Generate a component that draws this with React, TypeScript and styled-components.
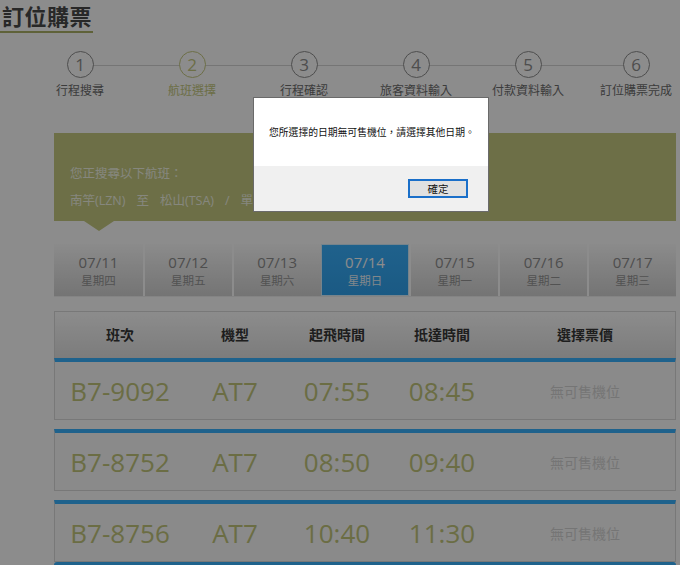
import styled, { createGlobalStyle } from 'styled-components';

const GlobalStyle = createGlobalStyle`
  html, body {
    margin: 0;
    padding: 0;
    background: #ffffff;
    overflow: hidden;
  }
  body {
    font-family: "Open Sans", "Noto Sans CJK TC", sans-serif;
  }
`;

const colors = {
  olive: '#c6ca81',
  oliveText: '#c3c77c',
  blue: '#3ab2ff',
  stepGray: '#8e8e8e',
  labelGray: '#6d6d6d',
  border: '#dadada',
};

const steps = ['行程搜尋', '航班選擇', '行程確認', '旅客資料輸入', '付款資料輸入', '訂位購票完成'];
const dates = [
  { d: '07/11', w: '星期四' },
  { d: '07/12', w: '星期五' },
  { d: '07/13', w: '星期六' },
  { d: '07/14', w: '星期日' },
  { d: '07/15', w: '星期一' },
  { d: '07/16', w: '星期二' },
  { d: '07/17', w: '星期三' },
];
const flights = [
  { no: 'B7-9092', type: 'AT7', dep: '07:55', arr: '08:45' },
  { no: 'B7-8752', type: 'AT7', dep: '08:50', arr: '09:40' },
  { no: 'B7-8756', type: 'AT7', dep: '10:40', arr: '11:30' },
];

export default function App() {
  return (
    <Page>
      <GlobalStyle />
      <Title>訂位購票</Title>

      <Steps>
        {steps.map((s, i) => (
          <Step key={s}>
            <StepCircle $active={i === 1}>{i + 1}</StepCircle>
            <StepLabel $active={i === 1}>{s}</StepLabel>
          </Step>
        ))}
      </Steps>

      <Banner>
        <BannerLine>您正搜尋以下航班：</BannerLine>
        <BannerLine>
          南竿(LZN)<Sep>至</Sep>松山(TSA)<Sep>/</Sep>單程
        </BannerLine>
      </Banner>

      <DateTabs>
        {dates.map((t, i) => (
          <DateTab key={t.d} $active={i === 3}>
            <TabDate>{t.d}</TabDate>
            <TabDay>{t.w}</TabDay>
          </DateTab>
        ))}
      </DateTabs>

      <TableHead>
        <HeadCell>班次</HeadCell>
        <HeadCell>機型</HeadCell>
        <HeadCell>起飛時間</HeadCell>
        <HeadCell>抵達時間</HeadCell>
        <HeadCell>選擇票價</HeadCell>
      </TableHead>

      {flights.map((f) => (
        <FlightRow key={f.no}>
          <BigCell>{f.no}</BigCell>
          <BigCell>{f.type}</BigCell>
          <BigCell>{f.dep}</BigCell>
          <BigCell>{f.arr}</BigCell>
          <SoldOut>無可售機位</SoldOut>
        </FlightRow>
      ))}
      <NextRowEdge />

      <Overlay>
        <Dialog>
          <DialogBody>您所選擇的日期無可售機位，請選擇其他日期。</DialogBody>
          <DialogFoot>
            <OkButton>確定</OkButton>
          </DialogFoot>
        </Dialog>
      </Overlay>
    </Page>
  );
}

const Page = styled.div`
  width: 680px;
  height: 565px;
  overflow: hidden;
  display: flex;
  flex-direction: column;
  & > * {
    flex-shrink: 0;
  }
`;

const Title = styled.h1`
  align-self: flex-start;
  margin: 0;
  padding: 0 1px 0 2px;
  font-family: "Noto Sans CJK TC", sans-serif;
  font-size: 22px;
  font-weight: 700;
  line-height: 31px;
  letter-spacing: 0.5px;
  color: #4a4a4a;
  border-bottom: 2px solid #adb269;
`;

const Steps = styled.div`
  display: grid;
  grid-template-columns: repeat(5, 112px) 104px;
  margin: 18px 0 0 24px;
`;

const Step = styled.div`
  position: relative;
  display: flex;
  flex-direction: column;
  align-items: center;
  &::before {
    content: '';
    position: absolute;
    top: 14px;
    left: 0;
    right: 0;
    height: 1px;
    background: #d6d6d6;
  }
  &:first-child::before { left: 50%; }
  &:last-child::before { right: 50%; }
`;

const StepCircle = styled.div<{ $active?: boolean }>`
  position: relative;
  width: 25px;
  height: 25px;
  border: 1.5px solid ${(p) => (p.$active ? colors.olive : colors.stepGray)};
  border-radius: 50%;
  background: #ffffff;
  color: ${(p) => (p.$active ? colors.olive : colors.stepGray)};
  font-size: 17px;
  line-height: 25px;
  text-align: center;
`;

const StepLabel = styled.div<{ $active?: boolean }>`
  margin-top: 4px;
  font-family: "Noto Sans CJK TC", sans-serif;
  font-size: 12px;
  line-height: 16px;
  color: ${(p) => (p.$active ? colors.olive : colors.labelGray)};
  white-space: nowrap;
`;

const Banner = styled.div`
  position: relative;
  margin: 35px 0 0 54px;
  width: 622px;
  height: 88px;
  box-sizing: border-box;
  padding: 27px 16px 0;
  background: ${colors.olive};
  &::after {
    content: '';
    position: absolute;
    left: 30px;
    bottom: -10px;
    border-left: 15px solid transparent;
    border-right: 15px solid transparent;
    border-top: 10px solid ${colors.olive};
  }
`;

const BannerLine = styled.div`
  font-family: "Open Sans", "Noto Sans CJK TC", sans-serif;
  font-size: 12.5px;
  line-height: 27px;
  color: #f4f6e6;
  white-space: nowrap;
`;

const Sep = styled.span`
  margin: 0 11px;
`;

const DateTabs = styled.div`
  margin: 23px 0 0 54px;
  width: 622px;
  height: 52px;
  display: grid;
  grid-template-columns: repeat(7, 1fr);
  border-bottom: 1px solid #f0f0f0;
`;

const DateTab = styled.div<{ $active?: boolean }>`
  display: flex;
  flex-direction: column;
  align-items: center;
  justify-content: center;
  box-sizing: border-box;
  border-left: 2px solid #ffffff;
  &:first-child { border-left: none; }
  background: ${(p) =>
    p.$active
      ? `linear-gradient(${colors.blue}, #31a4f0)`
      : 'linear-gradient(#fdfdfd, #d4d4d4)'};
  color: ${(p) => (p.$active ? '#ffffff' : '#8e8e8e')};
  ${(p) => p.$active && 'border: 1px solid #d8f0ff;'}
`;

const TabDate = styled.div`
  font-size: 15px;
  line-height: 20px;
`;

const TabDay = styled.div`
  font-family: "Noto Sans CJK TC", sans-serif;
  font-size: 11.5px;
  line-height: 17px;
  opacity: 0.9;
`;

const TableHead = styled.div`
  margin: 14px 0 0 54px;
  width: 622px;
  height: 47px;
  box-sizing: border-box;
  display: grid;
  grid-template-columns: 130px 100px 104px 106px 1fr;
  align-items: center;
  padding-bottom: 3px;
  border: 1px solid ${colors.border};
  border-bottom: none;
  background: linear-gradient(#ffffff, #e2e2e2);
`;

const HeadCell = styled.div`
  text-align: center;
  font-family: "Noto Sans CJK TC", sans-serif;
  font-size: 14px;
  font-weight: 700;
  color: #373737;
`;

const FlightRow = styled.div`
  margin: 0 0 9px 54px;
  width: 622px;
  height: 62px;
  box-sizing: border-box;
  display: grid;
  grid-template-columns: 130px 100px 104px 106px 1fr;
  align-items: center;
  border-top: 4px solid ${colors.blue};
  border-left: 1px solid ${colors.border};
  border-right: 1px solid ${colors.border};
  border-bottom: 1px solid ${colors.border};
  background: #fbfbfb;
`;

const NextRowEdge = styled.div`
  margin: -9px 0 0 54px;
  width: 622px;
  height: 4px;
  background: ${colors.blue};
  border-radius: 3px 3px 0 0;
`;

const BigCell = styled.div`
  text-align: center;
  font-family: "Open Sans", sans-serif;
  font-size: 26px;
  line-height: 32px;
  color: ${colors.oliveText};
`;

const SoldOut = styled.div`
  text-align: center;
  font-family: "Noto Sans CJK TC", sans-serif;
  font-size: 14px;
  color: #d6d6d6;
`;

const Overlay = styled.div`
  position: fixed;
  inset: 0;
  background: rgba(0, 0, 0, 0.45);
`;

const Dialog = styled.div`
  position: absolute;
  left: 253px;
  top: 97px;
  width: 236px;
  height: 115px;
  box-sizing: border-box;
  display: flex;
  flex-direction: column;
  background: #ffffff;
  border: 1px solid #6a6a6a;
  font-family: "Noto Sans CJK TC", sans-serif;
`;

const DialogBody = styled.div`
  height: 68px;
  display: flex;
  align-items: center;
  padding: 0 0 0 15px;
  font-size: 9.8px;
  color: #111111;
  white-space: nowrap;
`;

const DialogFoot = styled.div`
  flex: 1;
  display: flex;
  align-items: center;
  justify-content: flex-end;
  padding-right: 20px;
  background: #f0f0f0;
`;

const OkButton = styled.button`
  width: 60px;
  height: 19px;
  padding: 0;
  box-sizing: border-box;
  border: 1px solid #1a6fc9;
  box-shadow: inset 0 0 0 1px #1a6fc9;
  background: #e1e1e1;
  font-family: "Noto Sans CJK TC", sans-serif;
  font-size: 10.5px;
  color: #111111;
`;
